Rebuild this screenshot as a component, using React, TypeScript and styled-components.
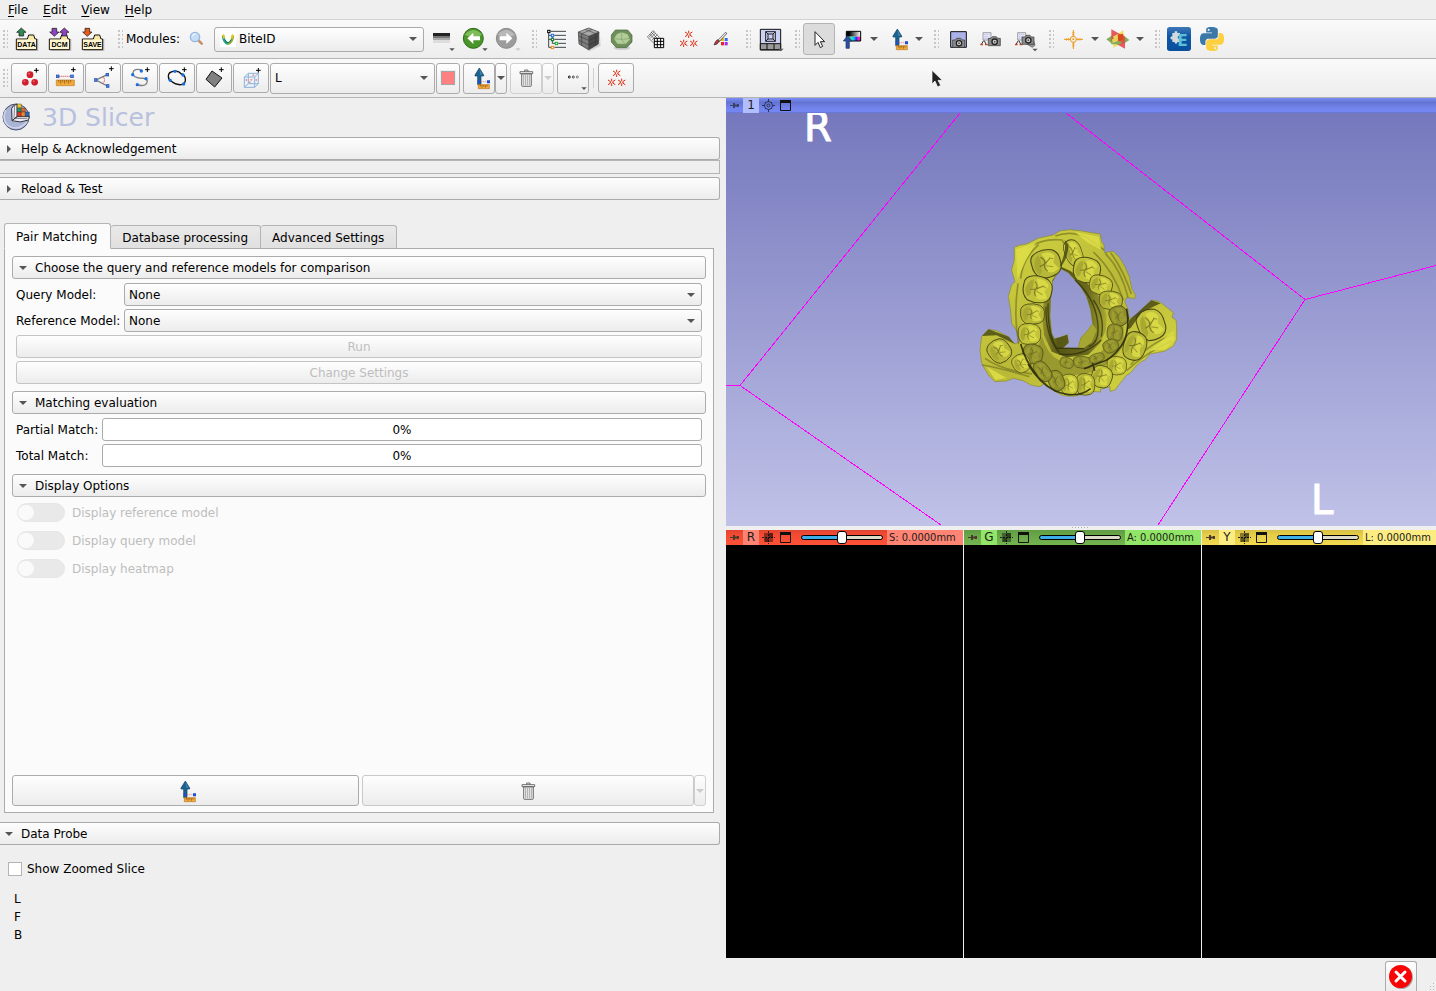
import React from "react";
import styled, { createGlobalStyle, css } from "styled-components";

const GlobalStyle = createGlobalStyle`
  *, *::before, *::after { box-sizing: border-box; }
  body {
    margin: 0;
    background: #efefef;
    color: #000;
    font: 12px/14px "DejaVu Sans", sans-serif;
  }
  button, select, input { font: inherit; color: inherit; margin: 0; }
  svg { display: block; flex: none; }
`;

const raised = css`
  border: 1px solid #ababab;
  border-radius: 3px;
  background: linear-gradient(#fefefe, #ececec);
`;

/* ---------- window frame ---------- */

const Window = styled.div`
  position: relative;
  display: flex;
  flex-direction: column;
  min-height: 100vh;
  overflow: hidden;
`;

const MenuBar = styled.nav`
  display: flex;
  height: 20px;
  padding-left: 1px;
  border-bottom: 1px solid #d2d2d2;
`;

const MenuItem = styled.button`
  padding: 0 8px 0 7px;
  border: 0;
  background: none;
  &::first-letter {
    text-decoration: underline;
    text-underline-offset: 2px;
  }
`;

const ToolBar = styled.div<{ $tight?: boolean }>`
  display: flex;
  align-items: center;
  gap: ${(p) => (p.$tight ? 1 : 6)}px;
  height: 39px;
  border-bottom: 1px solid #b4b4b4;
  background: linear-gradient(#fafafa, #ededed);
`;

const ToolGroup = styled.div`
  display: flex;
  align-items: center;
  gap: 1px;
`;

const Grip = styled.span`
  width: 10px;
  height: 18px;
  border: solid transparent;
  border-width: 0 2px 0 3px;
  background: radial-gradient(circle at 1px 1px, #c6c6c6 1px, transparent 1px) 0 0 / 4px 4px content-box;
`;

const ToolButton = styled.button<{ $pressed?: boolean }>`
  display: flex;
  align-items: center;
  justify-content: center;
  width: 32px;
  height: 32px;
  padding: 0;
  border: 1px solid ${(p) => (p.$pressed ? "#b3b3b3" : "transparent")};
  border-radius: 3px;
  background: ${(p) => (p.$pressed ? "#dcdcdc" : "none")};
`;

const SplitButton = styled.button`
  display: flex;
  align-items: center;
  width: 44px;
  height: 32px;
  padding: 0;
  border: 0;
  background: none;
`;

const ModulesLabel = styled.label`
  width: 53px;
`;

const PushButton = styled.button<{ $width: number; $tall?: boolean }>`
  ${raised}
  display: flex;
  align-items: center;
  justify-content: center;
  width: ${(p) => p.$width}px;
  height: ${(p) => (p.$tall ? 31 : 30)}px;
  padding: 0;
  &:disabled { border-color: #cfcfcf; }
`;

const Joined = styled.div`
  display: flex;
  margin-left: 2px;
`;

const Separator = styled.span`
  width: 1px;
  height: 20px;
  margin: 0 3px;
  background: #d0d0d0;
`;

const Swatch = styled.span`
  width: 14px;
  height: 14px;
  border: 1px solid #a6a6a6;
  outline: 1px solid #ededed;
  background: #ff8080;
`;

/* ---------- combo box ---------- */

const ComboFrame = styled.div<{ $width?: number; $height?: number }>`
  display: grid;
  grid-template-columns: minmax(0, 1fr);
  align-items: center;
  width: ${(p) => (p.$width ? `${p.$width}px` : "100%")};
  height: ${(p) => p.$height ?? 23}px;
  > * { grid-area: 1 / 1; }
`;

const ComboSelect = styled.select<{ $indent: number }>`
  ${raised}
  appearance: none;
  width: 100%;
  height: 100%;
  padding: 0 24px 0 ${(p) => p.$indent}px;
`;

const ComboArrow = styled.span`
  justify-self: end;
  margin-right: 5px;
  pointer-events: none;
`;

const ComboIcon = styled.span`
  justify-self: start;
  margin-left: 6px;
  pointer-events: none;
`;

/* ---------- module panel ---------- */

const Main = styled.main`
  flex: 1;
  display: grid;
  grid-template-columns: minmax(0, 720fr) minmax(0, 710fr);
  gap: 6px;
`;

const ModulePanel = styled.section`
  display: flex;
  flex-direction: column;
`;

const Brand = styled.header`
  display: flex;
  align-items: center;
  gap: 10px;
  height: 39px;
  padding-left: 1px;
`;

const BrandName = styled.h1`
  margin: 0;
  color: #b8c1de;
  font-size: 25px;
  line-height: 30px;
  font-weight: 400;
`;

const SectionHeader = styled.button<{ $flush?: boolean }>`
  ${raised}
  display: flex;
  align-items: center;
  gap: 7px;
  width: 100%;
  height: 23px;
  padding: 0 5px;
  ${(p) =>
    p.$flush &&
    css`
      padding-left: 4px;
      border-left: 0;
      border-radius: 0 3px 3px 0;
    `}
`;

const EmptyFrame = styled.div`
  height: 14px;
  margin-bottom: 3px;
  border: 1px solid #b4b4b4;
  border-left: 0;
`;

const TabList = styled.div`
  display: flex;
  align-items: flex-end;
  height: 26px;
  margin: 23px 0 -1px 4px;
  z-index: 1;
`;

const Tab = styled.button<{ $active?: boolean }>`
  height: ${(p) => (p.$active ? 26 : 24)}px;
  padding: ${(p) => (p.$active ? "1px 13px 0 11px" : "1px 12px 0 11px")};
  border: 1px solid #b4b4b4;
  border-left-width: ${(p) => (p.$active ? 1 : 0)}px;
  border-bottom-color: ${(p) => (p.$active ? "#fbfbfb" : "#ababab")};
  border-radius: 3px 3px 0 0;
  background: ${(p) => (p.$active ? "#fbfbfb" : "linear-gradient(#e9e9e9, #e0e0e0)")};
`;

const TabPane = styled.div`
  flex: 1;
  display: flex;
  flex-direction: column;
  margin: 0 6px 9px 4px;
  padding: 7px 7px 6px;
  border: 1px solid #ababab;
  background: #fbfbfb;
`;

const SectionBody = styled.div<{ $top?: number }>`
  display: flex;
  flex-direction: column;
  gap: 3px;
  padding: ${(p) => p.$top ?? 4}px 4px 7px;
`;

const Field = styled.div<{ $label: number }>`
  display: grid;
  grid-template-columns: ${(p) => p.$label}px minmax(0, 1fr);
  align-items: center;
  height: 23px;
  white-space: nowrap;
`;

const WideButton = styled.button`
  ${raised}
  height: 23px;
  padding: 0;
  &:disabled {
    border-color: #c4c4c4;
    color: #bebebe;
  }
`;

const Progress = styled.div`
  height: 23px;
  border: 1px solid #ababab;
  border-radius: 3px;
  background: #fff;
  line-height: 23px;
  text-align: center;
`;

const ToggleRow = styled.label`
  display: flex;
  align-items: center;
  gap: 7px;
  height: 25px;
  color: #bebebe;
`;

const Toggle = styled.input`
  appearance: none;
  width: 48px;
  height: 19px;
  margin-left: 1px;
  border: 1px solid #e6e6e6;
  border-radius: 10px;
  background: #e9e9e9;
  &::before {
    content: "";
    display: block;
    width: 16px;
    height: 15px;
    margin: 1px 0;
    border-radius: 8px;
    background: #fafafa;
  }
`;

const PaneActions = styled.div`
  display: flex;
  gap: 3px;
  margin-top: auto;
`;

const ActionButton = styled.button<{ $grow: number }>`
  ${raised}
  flex: ${(p) => p.$grow} 1 0;
  display: flex;
  align-items: center;
  justify-content: center;
  height: 31px;
  padding: 0;
  overflow: hidden;
  &:disabled { border-color: #c8c8c8; }
`;

const ActionSplit = styled.div`
  flex: 345 1 0;
  display: flex;
`;

const ProbeBody = styled.div`
  height: 113px;
  padding: 17px 8px 0;
`;

const CheckRow = styled.label`
  display: flex;
  align-items: center;
  gap: 5px;
`;

const CheckBox = styled.input`
  appearance: none;
  width: 14px;
  height: 14px;
  border: 1px solid #b4b4b4;
  background: #fff;
`;

const ProbeLines = styled.ul`
  margin: 14px 0 0;
  padding: 0 6px;
  list-style: none;
  line-height: 18px;
`;

/* ---------- viewers ---------- */

const Viewers = styled.section`
  display: flex;
  flex-direction: column;
`;

const ViewerBar = styled.header<{ $bg: string }>`
  display: flex;
  align-items: center;
  height: 15px;
  background: ${(p) => p.$bg};
  color: #1c1c1c;
`;

const ViewerTag = styled.span<{ $bg: string }>`
  width: 16px;
  height: 15px;
  margin-left: 3px;
  background: ${(p) => p.$bg};
  line-height: 15px;
  text-align: center;
`;

const BarButton = styled.button`
  display: flex;
  width: 14px;
  height: 15px;
  padding: 0;
  border: 0;
  background: none;
`;

const BarTools = styled.span`
  display: flex;
  gap: 3px;
  margin-left: 3px;
`;

const SliceSlider = styled.input`
  appearance: none;
  width: 82px;
  height: 13px;
  margin: 0 4px 0 8px;
  background: none;
  &::-webkit-slider-runnable-track {
    height: 5px;
    border: 1px solid #000;
    border-radius: 3px;
    background: linear-gradient(90deg, #3daee9 50%, #dcdcc8 50%);
  }
  &::-webkit-slider-thumb {
    appearance: none;
    width: 10px;
    height: 13px;
    margin-top: -5px;
    border: 1px solid #000;
    border-radius: 3px;
    background: #fff;
  }
`;

const SliceValue = styled.output<{ $bg: string }>`
  flex: 1;
  height: 15px;
  padding-left: 2px;
  background: ${(p) => p.$bg};
  font: 11px/15px "DejaVu Sans Condensed", "DejaVu Sans", sans-serif;
  white-space: nowrap;
`;

const Scene = styled.div`
  flex: 413 1 0;
  min-height: 200px;
  background: linear-gradient(#7578bc, #c0c2e8);
  > svg { width: 100%; height: 100%; }
`;

const Splitter = styled.div`
  display: flex;
  justify-content: center;
  height: 4px;
  padding-top: 1px;
  &::after {
    content: "";
    width: 18px;
    height: 1px;
    background: repeating-linear-gradient(90deg, #b0b0b0 0 1px, transparent 1px 3px);
  }
`;

const Slices = styled.div`
  flex: 428 1 0;
  display: grid;
  grid-template-columns: minmax(0, 237fr) minmax(0, 237fr) minmax(0, 234fr);
  gap: 1px;
  background: #efefef;
`;

const SliceView = styled.article`
  background: #000;
`;

const StatusBar = styled.footer`
  display: flex;
  justify-content: flex-end;
  gap: 12px;
  height: 33px;
  padding: 3px 1px 0 0;
`;

const ErrorButton = styled.button`
  ${raised}
  width: 32px;
  height: 30px;
  padding: 1px 3px;
  border-bottom: 0;
  border-radius: 3px 3px 0 0;
`;

const PointerLayer = styled.span`
  position: absolute;
  left: 931px;
  top: 69px;
  pointer-events: none;
`;

/* ---------- icons ---------- */

type IconProps = { x: number; y?: number; w?: number; children: React.ReactNode };

/** 32px tool icon drawn on a grid of three units per pixel. */
const Icon = ({ x, y = 69, w = 96, children }: IconProps) => (
  <svg width={w / 3} height="32" viewBox={`${x} ${y} ${w} 96`} aria-hidden="true">
    {children}
  </svg>
);

const Down = ({ color = "#555" }: { color?: string }) => (
  <svg width="12" height="6" viewBox="0 0 12 6" aria-hidden="true">
    <path d="M2 1h8L6 5z" fill={color} />
  </svg>
);

const Right = () => (
  <svg width="10" height="10" viewBox="0 0 10 10" aria-hidden="true">
    <path d="M3 1v8l4-4z" fill="#555" />
  </svg>
);

const SectionArrow = () => (
  <svg width="10" height="10" viewBox="0 0 10 10" aria-hidden="true">
    <path d="M1 3h8L5 7z" fill="#555" />
  </svg>
);

const MenuMark = ({ x, y, color = "#555" }: { x: number; y: number; color?: string }) => (
  <path d={`M${x - 8} ${y - 4}h16l-8 8z`} fill={color} />
);

const Folder = ({ text, children }: { text: string; children: React.ReactNode }) => (
  <Icon x={33}>
    <path d="M54 151h59v-34" fill="none" stroke="#c4c4c4" strokeWidth="4" />
    <path d="M49 149V117h33l4-12h15l4 12h5v32z" fill="#fbe7a4" stroke="#111" strokeWidth="3" />
    <path d="M51 119h57v28H51z" fill="#fff6cf" />
    <text x="79.500" y="141" textAnchor="middle" fontFamily="Liberation Sans, sans-serif" fontWeight="700" fontSize="21">
      {text}
    </text>
    {children}
  </Icon>
);

const ArrowUp = ({ x, fill }: { x: number; fill: string }) => (
  <path d={`M${x} 84l14 13h-7v11h-14v-11h-7z`} fill={fill} stroke="#111" strokeWidth="2" />
);

const ArrowDown = ({ x, fill }: { x: number; fill: string }) => (
  <path d={`M${x} 109l14-13h-7v-11h-14v11h-7z`} fill={fill} stroke="#111" strokeWidth="2" />
);

const Stars = () => (
  <Icon x={0} y={0}>
    {[[50, 34], [35, 61], [65, 61]].map(([x, y]) => (
      <path
        key={`${x}-${y}`}
        d={`M${x} ${y - 11}v8m0 6v8M${x - 6} ${y}h4m4 0h4M${x - 11} ${y - 7}l8 5m6 4l8 5M${x + 11} ${y - 7}l-8 5m-6 4l-8 5`}
        stroke="#e02c10"
        strokeWidth="3"
      />
    ))}
  </Icon>
);

const PlaceRuler = () => (
  <Icon x={453}>
    <path d="M502 87l13 21v3h-8v26h-10v-26h-8v-3z" fill="#1c6391" stroke="#10415f" strokeWidth="2" />
    <path d="M502 90l9 17h-5z" fill="#4a90ba" />
    <path d="M502 128h26" stroke="#e0434b" strokeWidth="2" strokeDasharray="3 3" />
    <path d="M497 124h8v8h-8zM525 124h9v9h-9z" fill="#1f4fd0" />
    <path d="M499 137h33v12h-33z" fill="#f6ac3c" stroke="#b9741d" strokeWidth="2" />
    <path d="M505 138v5m5-5v8m5-8v5m5-5v8m5-8v5" stroke="#7c4a10" strokeWidth="2" />
  </Icon>
);

const Trash = () => (
  <Icon x={450} y={188}>
    <path d="M494 217v-5h10v5M480 217h38v6h-38z" fill="#f4f4f4" stroke="#555" strokeWidth="2.500" />
    <path d="M485 224h29v35q0 2-3 2h-23q-3 0-3-2z" fill="#ededed" stroke="#555" strokeWidth="2.500" />
    <path d="M491 227v31m6-31v31m6-31v31m6-31v31" stroke="#888" strokeWidth="2" />
  </Icon>
);

const Plus = ({ x, y }: { x: number; y: number }) => (
  <path d={`M${x - 7} ${y}h14M${x} ${y - 7}v14`} stroke="#000" strokeWidth="3" />
);

const Dots = ({ at, fill = "#1c6fe0", r = 5 }: { at: number[][]; fill?: string; r?: number }) => (
  <>
    {at.map(([x, y]) => (
      <circle key={`${x}-${y}`} cx={x} cy={y} r={r} fill={fill} />
    ))}
  </>
);

const Squares = ({ at }: { at: number[][] }) => (
  <>
    {at.map(([x, y]) => (
      <rect key={`${x}-${y}`} x={x - 4} y={y - 4} width="8" height="8" fill="#4c86e8" stroke="#1d49a8" strokeWidth="2" />
    ))}
  </>
);

const CubeGrid = () => (
  <Icon x={639}>
    <path d="M660 136l28 18 34-16-2-28z" fill="#d2d2d2" />
    <path d="M686 84l31 12-31 13-31-13z" fill="#a8a8a8" />
    <path d="M655 96l31 13v40l-29-17z" fill="#7c7c7c" />
    <path d="M717 96l-31 13v40l29-17z" fill="#4a4a4a" />
    <path d="M676 88l31 13v37M696 88l-31 13v36M656 108l30 13 30-13M656 120l30 15 30-15" fill="none" stroke="#2e2e2e" strokeWidth="1.500" />
    <path d="M686 84l31 12-2 36-29 17-29-17-2-36zM655 96l31 13 31-13M686 109v40" fill="none" stroke="#3a3a3a" strokeWidth="2" />
  </Icon>
);

const ModelIcon = () => (
  <Icon x={738}>
    <ellipse cx="786" cy="144" rx="26" ry="6" fill="#d2d2d2" />
    <path d="M766 90h37l13 15v21l-16 17h-31l-15-17v-21z" fill="#6f8f5a" stroke="#48603c" strokeWidth="2" />
    <path d="M771 101l15-5 18 7 6 16-13 14-25-1-11-16z" fill="#b2cd99" />
    <path d="M766 90l5 11-17 4m17-4l-10 15 11 16-3 11m3-11l25 1 3 10m-3-10l13-14-6-16 12 2m-12-2l-1-13m1 13l-18-7-15 5m15-5l-2 22m-23-2l23 2 12 15m-12-15l24-2" fill="none" stroke="#6d8f58" strokeWidth="1.500" />
  </Icon>
);

const TransformIcon = () => (
  <Icon x={837}>
    <path d="M879 92l19 20-17 17-19-18zM874 97l19 19m-24-14l19 19m-5-26l-17 17m21-13l-17 17m22-12l-17 17" fill="none" stroke="#111" strokeWidth="2" strokeDasharray="3 1" />
    <path d="M883 115h28v28h-28z" fill="#fff" stroke="#000" strokeWidth="3" />
    <path d="M892 115v28m10-28v28m-19-19h28m-28 10h28" stroke="#000" strokeWidth="3" />
  </Icon>
);

const CameraBody = ({ x, y }: { x: number; y: number }) => (
  <g>
    <path d={`M${x - 18} ${y - 8}h8l4-5h12l4 5h8v22h-36z`} fill="#8a8a8a" stroke="#333" strokeWidth="2" />
    <circle cx={x + 1} cy={y + 2} r="8" fill="#ddd" stroke="#222" strokeWidth="4" />
    <circle cx={x + 1} cy={y + 2} r="3" fill="#555" />
  </g>
);

const SceneBoard = ({ x }: { x: number }) => (
  <g>
    <path d={`M${x} 98h24v22h-24z`} fill="#e7e9fb" stroke="#777" strokeWidth="2" />
    <path d={`M${x + 4} 104h15m-15 6h11m-11 5h15`} stroke="#9ea5de" strokeWidth="2" strokeDasharray="4 2" />
    <path d={`M${x + 2} 122l-7 11m9-11l5 11`} stroke="#333" strokeWidth="3" />
    <path d={`M${x - 8} 131h8v5h-8zM${x + 6} 131h8v5h-8z`} fill="#b9482e" />
  </g>
);

const SlicerLogo = () => (
  <svg width="31" height="31" viewBox="4 20 93 93" aria-hidden="true">
    <circle cx="49" cy="65" r="39" fill="#aab4d6" stroke="#4a5066" strokeWidth="3" />
    <path d="M18 44q-12 28 6 46 30 20 58-10" fill="none" stroke="#ced5ec" strokeWidth="5" />
    <path d="M52 26q-15 5-16 14l1 36 15-12zM37 76l15-12 37 0q0 8-6 11-20 9-46 1z" fill="#eceffa" stroke="#333" strokeWidth="3" />
    <path d="M45 31l-2 38 40 1" fill="none" stroke="#555" strokeWidth="2" />
    <g stroke="#222" strokeWidth="1">
      <path d="M53 26h12v12H53z" fill="#f2c52c" />
      <path d="M53 38h12v12H53z" fill="#22966b" />
      <path d="M53 50h12v13H53z" fill="#e0342a" />
      <path d="M65 38h12v12H65z" fill="#e8622c" />
      <path d="M65 50h12v13H65z" fill="#f08a2a" />
      <path d="M77 50h12v13H77z" fill="#2a64b4" />
    </g>
  </svg>
);

const PinIcon = ({ tint }: { tint: string }) => (
  <svg width="14" height="15" viewBox="0 0 14 15" aria-hidden="true">
    <path d="M4 7.500h4" stroke={tint} />
    <path d="M8 5v5M8 7.500h4M12 6v3" stroke={tint} strokeWidth="2" fill="none" />
  </svg>
);

const TargetIcon = ({ round }: { round?: boolean }) => (
  <svg width="14" height="15" viewBox="0 0 14 15" aria-hidden="true">
    {round ? (
      <g fill="none" stroke="#2a3158">
        <circle cx="6.500" cy="7.500" r="4" />
        <circle cx="6.500" cy="7.500" r="1.500" />
        <path d="M6.500 1v3m0 7v3M0 7.500h3m7 0h3M3 4l1 1m5 5l1 1M3 11l1-1m5-5l1-1" />
      </g>
    ) : (
      <g>
        <path d="M6.500 1v13M0 7.500h13" stroke="#222" strokeDasharray="2 1" />
        <path d="M2 3h9v9H2z" fill="#000" fillOpacity="0.400" />
        <path d="M7 3h4v5H7zM3 8h4v4H3z" fill="#000" fillOpacity="0.350" />
      </g>
    )}
  </svg>
);

const WindowIcon = () => (
  <svg width="14" height="15" viewBox="0 0 14 15" aria-hidden="true">
    <path d="M1.500 3h10v9.500h-10z" fill="none" stroke="#111" />
    <path d="M1 2h11v3H1z" fill="#111" />
  </svg>
);

/* ---------- dental scan ---------- */

// centre x, centre y, radius x, radius y, rotation
const teeth: number[][] = [
  [340, 98, 26, 40, -20], [258, 131, 45, 42, -15], [380, 150, 42, 38, 10], [422, 195, 36, 29, 15],
  [452, 241, 36, 28, 5], [476, 288, 28, 31, -20], [232, 208, 45, 40, 10], [217, 282, 37, 31, 0],
  [208, 342, 35, 32, 0], [218, 402, 31, 30, 10], [118, 393, 34, 36, -35], [184, 430, 27, 28, -30],
  [573, 314, 42, 47, -20], [524, 378, 35, 43, 20], [470, 437, 30, 28, 0], [425, 470, 32, 33, 20],
  [376, 493, 29, 33, 0], [328, 494, 27, 32, 0], [288, 482, 24, 32, -20], [248, 454, 22, 34, -35],
  [368, 427, 30, 18, 5], [320, 428, 22, 16, 20], [410, 414, 24, 14, -20], [464, 338, 24, 26, 10], [452, 378, 24, 20, -25],
];

const shaded = (i: number) => i > 17 || i === 5 || i === 9;

const DentalScan = () => (
  <g transform="translate(234 107) scale(0.33333)" strokeLinejoin="round">
    <defs>
      <linearGradient id="gum" x2="1" y2="1">
        <stop offset="0" stopColor="#d6d643" />
        <stop offset="0.500" stopColor="#b9b937" />
        <stop offset="1" stopColor="#d8d844" />
      </linearGradient>
      <linearGradient id="wall">
        <stop offset="0" stopColor="#8b8b2a" />
        <stop offset="0.250" stopColor="#44440f" />
        <stop offset="0.700" stopColor="#59591a" />
        <stop offset="1" stopColor="#a5a532" />
      </linearGradient>
    </defs>
    <path
      fill="url(#gum)"
      stroke="#8b8b25"
      strokeWidth="2"
      fillRule="evenodd"
      d="M163 82L178 76 200 72 235 55 280 45 300 33 330 29 365 33 395 38 420 42 425 65 432 75 433 98 460 94 478 112 495 140 508 170 515 205 526 225 524 236 500 232 494 245 505 270 507 297 530 285 545 268 575 240 600 246 620 262 640 278 636 292 648 300 650 320 650 358 640 378 615 393 590 398 570 402 555 420 545 424 530 436 510 460 500 465 480 490 465 510 450 514 450 500 420 508 422 516 395 514 375 522 340 529 310 527 280 512 250 492 240 500 215 496 190 482 160 475 140 483 105 485 85 465 65 430 60 390 65 350 85 328 110 332 145 350 165 372 180 364 172 335 155 310 152 270 145 230 155 195 165 185 155 150 163 120ZM303 146L278 180 272 230 270 290 275 340 283 356 300 352 322 344 326 368 308 385 355 384 362 355 380 335 398 312 392 270 380 230 365 205 345 180 325 158Z"
    />
    <path
      fill="url(#wall)"
      fillOpacity="0.850"
      fillRule="evenodd"
      d="M303 140L330 152 380 188 420 232 440 285 438 330 420 370 385 404 320 412 275 395 252 345 246 290 252 240 270 200ZM303 146L278 180 272 230 270 290 275 340 283 356 300 352 322 344 326 368 308 385 355 384 362 355 380 335 398 312 392 270 380 230 365 205 345 180 325 158Z"
    />
    <path d="M362 355L380 335 398 312 410 330 396 366 372 384 355 384Z" fill="#a6a633" />
    <path d="M345 180Q402 232 412 300T386 380M400 240Q436 290 424 350M258 260Q256 350 298 398M264 250Q262 340 290 384L372 386M298 402Q370 412 424 360" fill="none" stroke="#2b2b0a" strokeWidth="4" strokeOpacity="0.700" />
    <path d="M246 350Q262 404 300 422L390 418Q440 396 456 334L490 310 492 372Q462 430 400 456L310 472Q250 456 226 400Z" fill="#8c8c2b" fillOpacity="0.750" />
    <path d="M286 48Q330 30 380 52L432 90M205 84Q250 54 306 60L326 92M182 176Q188 116 236 74M174 190Q160 290 176 372M436 100Q484 150 504 232M452 98Q490 150 514 222M400 96Q460 150 490 240M66 435Q130 446 208 470M75 415Q124 450 216 462M512 434Q566 370 640 344M500 452Q560 396 636 362" fill="none" stroke="#737321" strokeWidth="5" strokeOpacity="0.650" />
    <path d="M168 88L228 68 196 124 172 176ZM345 36L416 50 424 90 380 66ZM80 440L140 474 106 480ZM570 392L640 332 644 360 616 388Z" fill="#dede48" fillOpacity="0.850" />
    {teeth.map(([x, y, rx, ry, turn], i) => (
      <g key={i} transform={`translate(${x} ${y}) rotate(${turn}) scale(${rx / 40} ${ry / 40})`}>
        <path
          d="M-38-8Q-40-32-16-38Q4-43 24-34Q42-22 39 4Q40 28 22 36Q0 44-22 36Q-40 22-38-8z"
          fill={shaded(i) ? "#8e8e2c" : i % 3 === 1 ? "#b7b738" : "#c3c33b"}
          stroke="#4a4a15"
          strokeWidth="3"
        />
        <path d="M-6-30Q18-36 28-16L20 2 30 22Q8 36-4 20L4-4z" fill="#dede48" fillOpacity={shaded(i) ? 0.2 : 0.8} />
        <path d="M-32 8Q-30-22-14-28Q-10-8-16 6Q-12 20-24 26z" fill="#a2a231" fillOpacity="0.800" />
        <path d="M-10-22Q2-12-4 0T0 22M-18 4L-4 0 14-12" fill="none" stroke="#5f5f1c" strokeWidth="3" strokeOpacity="0.700" />
        <path d="M0 6L16 14M12-14L22-8" fill="none" stroke="#84842a" strokeWidth="3" strokeOpacity="0.700" />
      </g>
    ))}
    <path d="M302 140Q322 120 326 74L314 60Q320 96 300 136ZM508 300L574 241 602 250 546 276 512 324 500 330ZM66 348L86 328 146 350 164 372 110 346Z" fill="#3c3c12" fillOpacity="0.750" />
    <path d="M204 432Q236 488 288 514 350 538 392 506M182 372Q196 424 232 468M500 266Q512 340 482 380T424 426L372 446M398 430L404 452" fill="none" stroke="#25250a" strokeWidth="5" strokeOpacity="0.850" />
  </g>
);

/* ---------- composed parts ---------- */

type ComboProps = { id: string; value: string; width?: number; height?: number; indent?: number; icon?: React.ReactNode; label?: string };

const Combo = ({ id, value, width, height, indent = 4, icon, label }: ComboProps) => (
  <ComboFrame $width={width} $height={height}>
    <ComboSelect id={id} $indent={indent} aria-label={label}>
      <option>{value}</option>
    </ComboSelect>
    {icon && <ComboIcon>{icon}</ComboIcon>}
    <ComboArrow>
      <Down />
    </ComboArrow>
  </ComboFrame>
);

const BiteLogo = () => (
  <svg width="16" height="16" viewBox="0 0 48 48" aria-hidden="true">
    <rect width="48" height="48" fill="#fff" />
    <path d="M9 14q3 22 15 24" fill="none" stroke="#24a37f" strokeWidth="8" />
    <path d="M39 14q-3 22-15 24" fill="none" stroke="#8db32e" strokeWidth="8" />
    <path d="M6 12l6-2 4 10-6 3zM42 12l-6-2-4 10 6 3z" fill="#e9c32b" />
    <path d="M14 26q4 8 10 9 6-1 9-9" fill="none" stroke="#186a78" strokeWidth="3" />
  </svg>
);

const slices = [
  { tag: "R", value: "S: 0.0000mm", bar: "linear-gradient(#e0452f, #f24a33 30%, #ff5238)", light: "#ff8473" },
  { tag: "G", value: "A: 0.0000mm", bar: "linear-gradient(#5f9c43, #68a548 30%, #74b451)", light: "#92e667" },
  { tag: "Y", value: "L: 0.0000mm", bar: "linear-gradient(#d8c044, #e5cc49 30%, #f3da50)", light: "#fdec82" },
];

const Markups = () => (
  <>
    <PushButton $width={36} aria-label="Point list">
      <Icon x={39} y={186}>
        <Dots at={[[90, 224], [76, 247], [104, 247]]} fill="#cf1f2c" r={10} />
        <Dots at={[[87, 221], [73, 244], [101, 244]]} fill="#e8606a" r={3} />
        <Plus x={109} y={211} />
      </Icon>
    </PushButton>
    <PushButton $width={36} aria-label="Line">
      <Icon x={150} y={186}>
        <path d="M178 229h34" stroke="#d9303a" strokeWidth="3" strokeDasharray="3 3" />
        <Squares at={[[173, 229], [216, 229]]} />
        <path d="M169 240h54v17h-54z" fill="#f2a93a" stroke="#c27f22" strokeWidth="2" />
        <path d="M176 240v7m6-7v11m6-11v7m6-7v11m6-11v7m6-7v11m6-11v7" stroke="#80500f" strokeWidth="2" />
        <Plus x={220} y={209} />
      </Icon>
    </PushButton>
    <PushButton $width={36} aria-label="Angle">
      <Icon x={261} y={186}>
        <path d="M322 224l-34 16 34 18" fill="none" stroke="#777" strokeWidth="4" />
        <path d="M309 230q9 10 0 20" fill="none" stroke="#d9303a" strokeWidth="3" strokeDasharray="3 2" />
        <Squares at={[[322, 224], [287, 240], [323, 258]]} />
        <Plus x={334} y={206} />
      </Icon>
    </PushButton>
    <PushButton $width={36} aria-label="Open curve">
      <Icon x={372} y={186}>
        <path d="M424 210q-22-6-25 8-1 14 19 16 22 0 24 9-1 18-28 12" fill="none" stroke="#808080" strokeWidth="4" />
        <Dots at={[[424, 213], [398, 224], [438, 236], [412, 254]]} />
        <Plus x={442} y={209} />
      </Icon>
    </PushButton>
    <PushButton $width={36} aria-label="Closed curve">
      <Icon x={483} y={186}>
        <path d="M526 213q-22 2-21 16 1 12 9 15 14 12 30 10 14-3 12-18-2-12-12-14-6-8-18-9z" fill="none" stroke="#111" strokeWidth="4" />
        <Dots at={[[525, 214], [549, 225], [511, 241], [551, 252]]} />
        <Plus x={553} y={209} />
      </Icon>
    </PushButton>
    <PushButton $width={36} aria-label="Plane">
      <Icon x={594} y={186}>
        <path d="M636 213l30 21-22 27-26-23z" fill="#808080" stroke="#111" strokeWidth="3" />
        <Plus x={664} y={209} />
      </Icon>
    </PushButton>
    <PushButton $width={36} aria-label="ROI">
      <Icon x={705} y={186}>
        <path d="M733 231l12-11h30v31l-11 11h-31zM733 231h31v31M764 231l11-11M745 220v31l-12 11M745 251h30" fill="#e8f0fa" fillOpacity="0.600" stroke="#8fb3d9" strokeWidth="3" />
        <Dots at={[[749, 247], [760, 226], [739, 240], [769, 240], [754, 239]]} fill="#e89a9a" r={3} />
        <Plus x={775} y={211} />
      </Icon>
    </PushButton>
  </>
);

export default function App() {
  return (
    <Window>
      <GlobalStyle />
      <MenuBar>
        {["File", "Edit", "View", "Help"].map((name) => (
          <MenuItem key={name}>{name}</MenuItem>
        ))}
      </MenuBar>

      <ToolBar>
        <ToolGroup>
          <Grip />
          <ToolButton aria-label="Add data">
            <Folder text="DATA"><ArrowUp x={64} fill="#2d8a55" /></Folder>
          </ToolButton>
          <ToolButton aria-label="DICOM">
            <Folder text="DCM">
              <ArrowDown x={64} fill="#8e44c0" />
              <ArrowUp x={94} fill="#8e44c0" />
            </Folder>
          </ToolButton>
          <ToolButton aria-label="Save">
            <Folder text="SAVE"><ArrowDown x={64} fill="#e85a1c" /></Folder>
          </ToolButton>
        </ToolGroup>

        <ToolGroup>
          <Grip />
          <ModulesLabel htmlFor="module">Modules:</ModulesLabel>
          <ToolButton aria-label="Find module">
            <Icon x={541}>
              <path d="M597 122l9 9" stroke="#c98f62" strokeWidth="8" strokeLinecap="round" />
              <circle cx="586" cy="111" r="14" fill="#c5def5" stroke="#94b6dc" strokeWidth="4" />
              <path d="M578 109q2-8 10-8" fill="none" stroke="#fff" strokeWidth="3" />
            </Icon>
          </ToolButton>
          <span />
          <Combo id="module" value="BiteID" width={210} height={25} indent={24} icon={<BiteLogo />} />
          <ToolButton aria-label="Module history">
            <Icon x={195}>
              <path d="M219 99h51v9h-51z" fill="#222" />
              <path d="M219 108h51v6h-51z" fill="#777" />
              <path d="M219 114h51v6h-51z" fill="#aaa" />
              <path d="M219 120h51v9h-51z" fill="#ddd" />
              <MenuMark x={276} y={149} />
            </Icon>
          </ToolButton>
          <ToolButton aria-label="Previous module">
            <Icon x={294}>
              <circle cx="340" cy="115" r="30" fill="#4b962a" stroke="#2d6a17" strokeWidth="3" />
              <path d="M314 104q26-28 52 0-26 14-52 0z" fill="#7cbc59" />
              <path d="M322 115l18-17v11h20v12h-20v11z" fill="#fff" />
              <MenuMark x={375} y={149} />
            </Icon>
          </ToolButton>
          <ToolButton aria-label="Next module">
            <Icon x={393}>
              <circle cx="439" cy="115" r="30" fill="#9c9c9c" stroke="#8a8a8a" strokeWidth="3" />
              <path d="M413 104q26-28 52 0-26 14-52 0z" fill="#b9b9b9" />
              <path d="M457 115l-18-17v11h-20v12h20v11z" fill="#fff" />
              <MenuMark x={474} y={149} color="#ccc" />
            </Icon>
          </ToolButton>
        </ToolGroup>

        <ToolGroup>
          <Grip />
          <ToolButton aria-label="Data">
            <Icon x={540}>
              <path d="M566 96v46M577 110v20h10M572 94h46M583 106h35M583 118h35M595 130h23M583 142h35M566 106h8M566 118h8M566 142h8" fill="none" stroke="#3f474c" strokeWidth="3" />
              {[[566, 94, "#000"], [577, 106, "#1a6fe0"], [577, 118, "#0f7a26"], [589, 130, "#18b030"], [577, 142, "#f08a1a"]].map(([x, y, c]) => (
                <rect key={`${y}`} x={Number(x) - 3} y={Number(y) - 3} width="7" height="7" fill="#fff" stroke={String(c)} strokeWidth="3" />
              ))}
            </Icon>
          </ToolButton>
          <ToolButton aria-label="Volume rendering"><CubeGrid /></ToolButton>
          <ToolButton aria-label="Models"><ModelIcon /></ToolButton>
          <ToolButton aria-label="Transforms"><TransformIcon /></ToolButton>
          <ToolButton aria-label="Markups"><Stars /></ToolButton>
          <ToolButton aria-label="Segment editor">
            <Icon x={1035}>
              <path d="M1083 114h9v9h-9z" fill="#f0b91a" />
              <path d="M1094 114h9v9h-9z" fill="#2f6ff0" />
              <path d="M1083 126h9v10h-9z" fill="#e02626" />
              <path d="M1094 126h9v10h-9z" fill="#a52be0" />
              <path d="M1099 98l-24 26" stroke="#222" strokeWidth="7" />
              <path d="M1098 99l-22 23" stroke="#f4f4f4" strokeWidth="4" />
              <path d="M1078 122q-4 12-16 13 4-12 10-16z" fill="#c53030" stroke="#333" strokeWidth="2" />
            </Icon>
          </ToolButton>
        </ToolGroup>

        <ToolGroup>
          <Grip />
          <ToolButton aria-label="Layout">
            <Icon x={72}>
              <path d="M91 88h61v62H91z" fill="#cdd1f3" stroke="#111" strokeWidth="3" />
              <path d="M91 131h61v18H91z" fill="#9a9a9a" stroke="#111" strokeWidth="3" />
              <path d="M111 131v18m21-18v18" stroke="#111" strokeWidth="3" />
              <path d="M107 95h29v29h-29zM114 102h15v15h-15zM107 95l7 7m22-7l-7 7m-22 22l7-7m22 7l-7-7" fill="none" stroke="#222" strokeWidth="3" />
              <MenuMark x={153} y={150} />
            </Icon>
          </ToolButton>
        </ToolGroup>

        <ToolGroup>
          <Grip />
          <ToolButton $pressed aria-label="Select">
            <Icon x={219}>
              <path d="M255 95v41l9-9 7 16 7-4-7-14h13z" fill="#fff" stroke="#222" strokeWidth="3" />
            </Icon>
          </ToolButton>
          <SplitButton aria-label="Window level">
            <Icon x={318}>
              <defs>
                <linearGradient id="grey"><stop offset="0.200" stopColor="#000" /><stop offset="1" stopColor="#fff" /></linearGradient>
                <linearGradient id="hue">
                  <stop offset="0" stopColor="#30c850" /><stop offset="0.300" stopColor="#38e8a0" />
                  <stop offset="0.500" stopColor="#18c8f0" /><stop offset="0.700" stopColor="#2030f0" />
                  <stop offset="0.850" stopColor="#f020e0" /><stop offset="1" stopColor="#f02040" />
                </linearGradient>
              </defs>
              <path d="M349 94h43v16h-43z" fill="url(#grey)" />
              <path d="M349 110h43v13h-43z" fill="url(#hue)" />
              <path d="M349 94h43v29h-43z" fill="none" stroke="#000" strokeWidth="3" />
              <path d="M353 107l13 16h-8v22h-10v-22h-8z" fill="#2d4f9e" stroke="#1b346f" strokeWidth="2" />
            </Icon>
            <Down />
          </SplitButton>
          <SplitButton aria-label="Place line">
            <PlaceRuler />
            <Down />
          </SplitButton>
        </ToolGroup>

        <ToolGroup>
          <Grip />
          <ToolButton aria-label="Screenshot">
            <Icon x={636}>
              <path d="M662 95h47v47h-47z" fill="#aab2e8" stroke="#111" strokeWidth="3" />
              <CameraBody x={686} y={128} />
            </Icon>
          </ToolButton>
          <ToolButton aria-label="Capture scene">
            <Icon x={735}>
              <SceneBoard x={759} />
              <CameraBody x={793} y={123} />
            </Icon>
          </ToolButton>
          <ToolButton aria-label="Scene views">
            <Icon x={834}>
              <SceneBoard x={863} />
              <path d="M888 108l22 12 5 16-8 6-24-14z" fill="#999" stroke="#555" strokeWidth="2" />
              <CameraBody x={894} y={119} />
              <MenuMark x={915} y={150} />
            </Icon>
          </ToolButton>
        </ToolGroup>

        <ToolGroup>
          <Grip />
          <SplitButton aria-label="Crosshair">
            <Icon x={51}>
              <path d="M72 118h20m16 0h21M100 90v20m0 16v21" stroke="#ec9414" strokeWidth="3" />
              <path d="M80 114v8m6-8v8m28-8v8m6-8v8M96 98h8m-8 6h8m-8 28h8m-8 6h8" stroke="#ec9414" strokeWidth="2" />
              <circle cx="100" cy="118" r="9" fill="none" stroke="#ec9414" strokeWidth="3" />
              <circle cx="100" cy="118" r="3" fill="#ec9414" />
            </Icon>
            <Down />
          </SplitButton>
          <SplitButton aria-label="Slice intersections">
            <Icon x={186}>
              <path d="M199 118l18-12h33l18 14-17 11h-35z" fill="#7eb05a" />
              <path d="M250 90v34l-30 20v-32z" fill="#f2df5c" />
              <path d="M214 88l41 22v36l-41-22z" fill="#e24b4b" fillOpacity="0.900" />
              <path d="M218 110l15-7 17 9-17 12z" fill="#f0dc64" />
              <path d="M233 104l17-3v20l-17 3z" fill="#d84a1c" />
              <path d="M216 119l17-14v20l-14 8z" fill="#e8d25a" />
              <path d="M212 131l21-8 14 4-8 6h-24z" fill="#7eb05a" />
            </Icon>
            <Down />
          </SplitButton>
        </ToolGroup>

        <ToolGroup>
          <Grip />
          <ToolButton aria-label="Extensions">
            <Icon x={369}>
              <defs>
                <linearGradient id="ext" x2="0" y2="1"><stop offset="0" stopColor="#3e77b6" /><stop offset="0.400" stopColor="#0d57a6" /><stop offset="1" stopColor="#0a4f9c" /></linearGradient>
              </defs>
              <rect x="381" y="81" width="72" height="72" rx="8" fill="url(#ext)" />
              <path d="M397 99h7q-2-6 4-6 5 0 4 6h8v9q-7-2-7 4t7 4v10h-8q1 5-4 5t-4-5h-7v-8q-6 1-6-4t6-5z" fill="#d3dade" />
              <text x="412" y="139" fontFamily="DejaVu Sans, sans-serif" fontWeight="700" fontSize="46" fill="#5cc0d6">E</text>
            </Icon>
          </ToolButton>
          <ToolButton aria-label="Python console">
            <Icon x={468}>
              <g transform="translate(480 81) scale(3)">
                <path fill="#3b78a8" d="M14.25.18l.9.2.73.26.59.3.45.32.34.34.25.34.16.33.1.3.04.26.02.2-.01.13V8.5l-.05.63-.13.55-.21.46-.26.38-.3.31-.33.25-.35.19-.35.14-.33.1-.3.07-.26.04-.21.02H8.77l-.69.05-.59.14-.5.22-.41.27-.33.32-.27.35-.2.36-.15.37-.1.35-.07.32-.04.27-.02.21v3.06H3.17l-.21-.03-.28-.07-.32-.12-.35-.18-.36-.26-.36-.36-.35-.46-.32-.59-.28-.73-.21-.88-.14-1.05-.05-1.23.06-1.22.16-1.04.24-.87.32-.71.36-.57.4-.44.42-.33.42-.24.4-.16.36-.1.32-.05.24-.01h.16l.06.01h8.16v-.83H6.18l-.01-2.75-.02-.37.05-.34.11-.31.17-.28.25-.26.31-.23.38-.2.44-.18.51-.15.58-.12.64-.1.71-.06.77-.04.84-.02 1.27.05zm-6.3 1.98l-.23.33-.08.41.08.41.23.34.33.22.41.09.41-.09.33-.22.23-.34.08-.41-.08-.41-.23-.33-.33-.22-.41-.09-.41.09z" />
                <path fill="#fdd03f" d="M21.04 6.11l.28.06.32.12.35.18.36.27.36.35.35.47.32.59.28.73.21.88.14 1.04.05 1.23-.06 1.23-.16 1.04-.24.86-.32.71-.36.57-.4.45-.42.33-.42.24-.4.16-.36.09-.32.05-.24.02-.16-.01h-8.22v.82h5.84l.01 2.76.02.36-.05.34-.11.31-.17.29-.25.25-.31.24-.38.2-.44.17-.51.15-.58.13-.64.09-.71.07-.77.04-.84.01-1.27-.04-1.07-.14-.9-.2-.73-.25-.59-.3-.45-.33-.34-.34-.25-.34-.16-.33-.1-.3-.04-.25-.02-.2.01-.13v-5.34l.05-.64.13-.54.21-.46.26-.38.3-.32.33-.24.35-.2.35-.14.33-.1.3-.06.26-.04.21-.02.13-.01h5.84l.69-.05.59-.14.5-.21.41-.28.33-.32.27-.35.2-.36.15-.36.1-.35.07-.32.04-.28.02-.21V6.07h2.09l.14.01zm-6.47 14.25l-.23.33-.08.41.08.41.23.33.33.23.41.08.41-.08.33-.23.23-.33.08-.41-.08-.41-.23-.33-.33-.23-.41-.08-.41.08z" />
              </g>
            </Icon>
          </ToolButton>
        </ToolGroup>
      </ToolBar>

      <ToolBar $tight>
        <Grip />
        <Markups />
        <Combo id="node" label="Markups node" value="L" width={165} height={31} />
        <PushButton $width={24} $tall aria-label="Node colour"><Swatch /></PushButton>
        <Joined>
          <PushButton $width={32} $tall aria-label="Place control point"><PlaceRuler /></PushButton>
          <PushButton $width={12} $tall aria-label="Place options"><Down /></PushButton>
        </Joined>
        <Joined>
          <PushButton $width={32} $tall disabled aria-label="Delete point"><Trash /></PushButton>
          <PushButton $width={12} $tall disabled aria-label="Delete options"><Down color="#ccc" /></PushButton>
        </Joined>
        <Joined>
          <PushButton $width={32} $tall aria-label="More">
            <Icon x={591} y={187}>
              <g fill="none" strokeWidth="3">
                <circle cx="628" cy="232" r="3" stroke="#111" />
                <circle cx="640" cy="232" r="3" stroke="#444" />
                <circle cx="652" cy="232" r="3" stroke="#777" />
              </g>
              <MenuMark x={672} y={267} />
            </Icon>
          </PushButton>
        </Joined>
        <Separator />
        <PushButton $width={36} aria-label="Markups module"><Stars /></PushButton>
      </ToolBar>

      <Main>
        <ModulePanel>
          <Brand>
            <SlicerLogo />
            <BrandName>3D Slicer</BrandName>
          </Brand>
          <SectionHeader $flush><Right />Help &amp; Acknowledgement</SectionHeader>
          <EmptyFrame />
          <SectionHeader $flush><Right />Reload &amp; Test</SectionHeader>

          <TabList role="tablist">
            <Tab $active role="tab" aria-selected="true">Pair Matching</Tab>
            <Tab role="tab" aria-selected="false">Database processing</Tab>
            <Tab role="tab" aria-selected="false">Advanced Settings</Tab>
          </TabList>
          <TabPane role="tabpanel">
            <SectionHeader><SectionArrow />Choose the query and reference models for comparison</SectionHeader>
            <SectionBody>
              <Field $label={108}>
                <label htmlFor="query">Query Model:</label>
                <Combo id="query" value="None" />
              </Field>
              <Field $label={108}>
                <label htmlFor="reference">Reference Model:</label>
                <Combo id="reference" value="None" />
              </Field>
              <WideButton disabled>Run</WideButton>
              <WideButton disabled>Change Settings</WideButton>
            </SectionBody>

            <SectionHeader><SectionArrow />Matching evaluation</SectionHeader>
            <SectionBody>
              <Field $label={86}>
                <span id="partial">Partial Match:</span>
                <Progress role="progressbar" aria-labelledby="partial" aria-valuenow={0}>0%</Progress>
              </Field>
              <Field $label={86}>
                <span id="total">Total Match:</span>
                <Progress role="progressbar" aria-labelledby="total" aria-valuenow={0}>0%</Progress>
              </Field>
            </SectionBody>

            <SectionHeader><SectionArrow />Display Options</SectionHeader>
            <SectionBody $top={3}>
              {["Display reference model", "Display query model", "Display heatmap"].map((name) => (
                <ToggleRow key={name}>
                  <Toggle type="checkbox" disabled />
                  {name}
                </ToggleRow>
              ))}
            </SectionBody>

            <PaneActions>
              <ActionButton $grow={345} aria-label="Place landmarks"><PlaceRuler /></ActionButton>
              <ActionSplit>
                <ActionButton $grow={1} disabled aria-label="Delete landmarks"><Trash /></ActionButton>
                <PushButton $width={12} $tall disabled aria-label="Delete options"><Down color="#ccc" /></PushButton>
              </ActionSplit>
            </PaneActions>
          </TabPane>

          <SectionHeader $flush><SectionArrow />Data Probe</SectionHeader>
          <ProbeBody>
            <CheckRow>
              <CheckBox type="checkbox" />
              Show Zoomed Slice
            </CheckRow>
            <ProbeLines>
              <li>L</li>
              <li>F</li>
              <li>B</li>
            </ProbeLines>
          </ProbeBody>
        </ModulePanel>

        <Viewers>
          <ViewerBar $bg="linear-gradient(#7b8df6, #6373d2 30%, #7283ec 65%, #7486f2 90%, #6372cf)">
            <BarButton aria-label="Pin view"><PinIcon tint="#3a4268" /></BarButton>
            <ViewerTag $bg="#b2bdfd">1</ViewerTag>
            <BarTools>
              <BarButton aria-label="Center view"><TargetIcon round /></BarButton>
              <BarButton aria-label="Maximize view"><WindowIcon /></BarButton>
            </BarTools>
          </ViewerBar>
          <Scene>
            <svg viewBox="0 0 710 413" preserveAspectRatio="xMidYMid slice" role="img" aria-label="3D view">
              <path
                d="M234 0L14 272.500 215 412M0 272.500h14M340 0l239 186.500 131-34M579 186.500L432 412"
                fill="none"
                stroke="#f0f"
                shapeRendering="crispEdges"
              />
              <g fill="#fff" stroke="#fff" fontFamily="DejaVu Sans, sans-serif" fontSize="40">
                <text x="78" y="28">R</text>
                <text x="585" y="401">L</text>
              </g>
              <DentalScan />
            </svg>
          </Scene>
          <Splitter />
          <Slices>
            {slices.map((s) => (
              <SliceView key={s.tag}>
                <ViewerBar $bg={s.bar}>
                  <BarButton aria-label="Pin slice"><PinIcon tint="#4a3a2c" /></BarButton>
                  <ViewerTag $bg={s.light}>{s.tag}</ViewerTag>
                  <BarTools>
                    <BarButton aria-label="Fit slice"><TargetIcon /></BarButton>
                    <BarButton aria-label="Maximize slice"><WindowIcon /></BarButton>
                  </BarTools>
                  <SliceSlider type="range" defaultValue={50} aria-label={`${s.tag} slice offset`} />
                  <SliceValue $bg={s.light}>{s.value}</SliceValue>
                </ViewerBar>
              </SliceView>
            ))}
          </Slices>
        </Viewers>
      </Main>

      <StatusBar>
        <ErrorButton aria-label="Error log">
          <svg width="24" height="24" viewBox="0 0 24 24" aria-hidden="true">
            <circle cx="12.500" cy="12.500" r="11.500" fill="#a9a9a9" />
            <circle cx="11.500" cy="11.500" r="11.500" fill="#f80505" />
            <path d="M7 7l9 9m0-9l-9 9" stroke="#fff" strokeWidth="3" strokeLinecap="round" />
          </svg>
        </ErrorButton>
        <svg width="6" height="30" viewBox="0 0 6 30" aria-hidden="true">
          <path d="M4 22h1v1H4zM4 25h1v1H4zM1 25h1v1H1zM4 28h1v1H4zM1 28h1v1H1z" fill="#b8b8b8" />
        </svg>
      </StatusBar>

      <PointerLayer>
        <svg width="14" height="20" viewBox="603 207 42 60" aria-hidden="true">
          <path d="M606 211v41l9-9 8 18 9-5-8-15h13z" fill="#222" stroke="#fff" strokeWidth="2" />
        </svg>
      </PointerLayer>
    </Window>
  );
}
